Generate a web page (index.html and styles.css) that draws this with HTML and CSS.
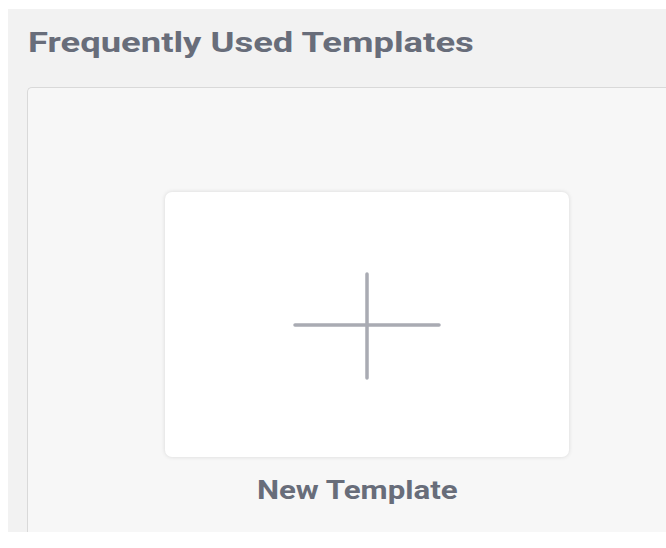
FILE: index.html
```html
<!DOCTYPE html>
<html>
<head>
<meta charset="utf-8">
<link rel="stylesheet" href="styles.css">
</head>
<body>
<section class="panel">
  <h2 class="panel-title"><span class="title-text">Frequently Used Templates</span></h2>
  <div class="templates">
    <div class="template-item">
      <div class="template-card">
        <svg class="plus" width="148" height="108" viewBox="0 0 148 108">
          <path d="M2 53 H146 M74 2 V106" stroke="#a9abb3" stroke-width="3.5" stroke-linecap="round" fill="none"/>
        </svg>
      </div>
      <div class="template-name"><span class="name-text">New Template</span></div>
    </div>
  </div>
</section>
</body>
</html>
```
FILE: styles.css
```css
html, body {
  margin: 0;
  padding: 0;
  background: #ffffff;
}
body {
  padding: 9px 0 16px 8px;
  font-family: Roboto, "Liberation Sans", sans-serif;
}
.panel {
  background: #f2f2f2;
  padding: 0 0 0 19px;
  height: 523px;
  overflow: hidden;
}
.panel-title {
  margin: 0;
  padding: 17px 0 0 1px;
  height: 78px;
  box-sizing: border-box;
  font-size: 28px;
  font-weight: 700;
  color: #686d7a;
  line-height: 33px;
  white-space: nowrap;
}
.title-text {
  display: inline-block;
  transform: scaleX(1.3);
  transform-origin: left center;
}
.templates {
  background: #f7f7f7;
  border: 1px solid #d9d9d9;
  border-right: none;
  border-bottom: none;
  border-radius: 5px 0 0 0;
  height: 445px;
  padding: 104px 0 0 137px;
  box-sizing: border-box;
}
.template-item {
  width: 404px;
  display: flex;
  flex-direction: column;
  align-items: center;
}
.template-card {
  width: 404px;
  height: 265px;
  background: #fff;
  border-radius: 7px;
  box-shadow: 0 0 4px rgba(0,0,0,0.13);
  display: flex;
  align-items: center;
  justify-content: center;
}
.plus {
  display: block;
  margin-top: 3px;
}
.template-name {
  margin-top: 19px;
  margin-right: 20px;
  font-size: 25px;
  font-weight: 700;
  color: #686d7a;
  line-height: 30px;
  white-space: nowrap;
}
.name-text {
  display: inline-block;
  transform: scaleX(1.25);
  transform-origin: center center;
}
```
